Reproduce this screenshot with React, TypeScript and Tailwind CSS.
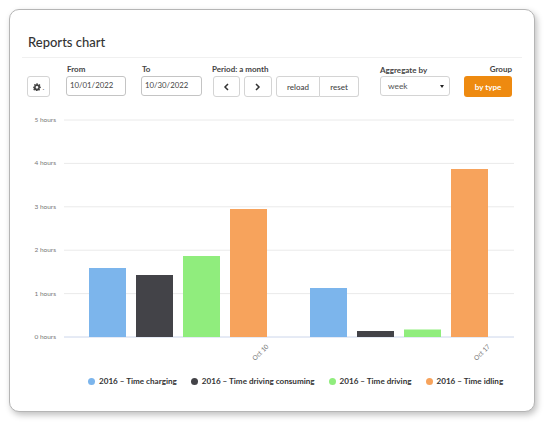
const Y_LABELS = ['5 hours', '4 hours', '3 hours', '2 hours', '1 hours', '0 hours'];

// x, top y of each bar, in chart coordinates
const BARS = [
  { x: 79, top: 158, fill: '#7cb5ec' },
  { x: 126, top: 165, fill: '#434348' },
  { x: 173, top: 146, fill: '#90ed7d' },
  { x: 220, top: 99, fill: '#f7a35c' },
  { x: 300, top: 178, fill: '#7cb5ec' },
  { x: 347, top: 221, fill: '#434348' },
  { x: 394, top: 219.5, fill: '#90ed7d' },
  { x: 441, top: 59, fill: '#f7a35c' },
];

const LEGEND = [
  { label: '2016 – Time charging', color: 'bg-[#7cb5ec]' },
  { label: '2016 – Time driving consuming', color: 'bg-[#434348]' },
  { label: '2016 – Time driving', color: 'bg-[#90ed7d]' },
  { label: '2016 – Time idling', color: 'bg-[#f7a35c]' },
];

function Field({ label, value, width }: { label: string; value: string; width: string }) {
  return (
    <div className="flex flex-col mb-[1px]">
      <span className="text-[8px] leading-[10px] font-bold text-[#444] mb-[2px] ml-[1px]">{label}</span>
      <div className={`${width} h-[20px] border border-[#c4c4c4] rounded-[3px] flex items-center pl-[3px] text-[7.8px] text-[#444]`}>
        {value}
      </div>
    </div>
  );
}

function GearIcon() {
  return (
    <svg width="8" height="8" viewBox="0 0 24 24" fill="#444">
      <path
        fillRule="evenodd"
        d="M10 1h4l.7 3.2 1.9.8 2.8-1.8 2.8 2.8-1.8 2.8.8 1.9L23.4 11v4l-3.2.7-.8 1.9 1.8 2.8-2.8 2.8-2.8-1.8-1.9.8-.7 2.8h-4l-.7-3.2-1.9-.8-2.8 1.8-2.8-2.8 1.8-2.8-.8-1.9L.6 15v-4l3.2-.7.8-1.9L2.8 5.6l2.8-2.8 2.8 1.8 1.9-.8zM12 9a4 4 0 1 0 0 8 4 4 0 0 0 0-8z"
      />
    </svg>
  );
}

function Chart() {
  return (
    <svg width="526" height="258" className="block">
      {Y_LABELS.map((label, i) => {
        const y = 10 + i * 43.4;
        return (
          <g key={label}>
            <line x1="54" x2="504" y1={y} y2={y} stroke={i === 5 ? '#ccd6eb' : '#eaeaea'} strokeWidth="1" />
            <text x="46" y={y + 2} textAnchor="end" fontSize="6.5" fill="#777">
              {label}
            </text>
          </g>
        );
      })}
      {BARS.map(bar => (
        <rect key={bar.x} x={bar.x} y={bar.top} width="37" height={227 - bar.top} fill={bar.fill} />
      ))}
      <text x="259" y="237" textAnchor="end" fontSize="6.5" fill="#777" transform="rotate(-45 259 237)">
        Oct 10
      </text>
      <text x="480.5" y="237" textAnchor="end" fontSize="6.5" fill="#777" transform="rotate(-45 480.5 237)">
        Oct 17
      </text>
    </svg>
  );
}

export default function App() {
  return (
    <div className="w-[544px] h-[422px] bg-white pt-[9px] pl-[9px] font-['Lato','Noto_Sans',sans-serif]">
      <div className="w-[526px] h-[403px] bg-white border border-[#b5b5b5] rounded-[10px] shadow-[2px_3px_6px_rgba(0,0,0,0.25)] overflow-hidden">
        <div className="mx-[12px] h-[48px] border-b border-[#f0f0f0] flex items-end pb-[6px] pl-[6px]">
          <h1 className="text-[13px] leading-[18px] font-medium text-[#333]">Reports chart</h1>
        </div>

        <div className="flex items-end h-[39px] pl-[17px]">
          <div className="w-[23px] h-[21px] border border-[#d4d4d4] rounded-[3px] flex items-center justify-center mr-[16px]">
            <GearIcon />
            <span className="text-[8px] leading-[8px] text-[#666] ml-[2px] self-end mb-[5px]">.</span>
          </div>
          <div className="mr-[15px]">
            <Field label="From" value="10/01/2022" width="w-[60px]" />
          </div>
          <div className="mr-[10px]">
            <Field label="To" value="10/30/2022" width="w-[61px]" />
          </div>
          <div className="flex flex-col w-[147px] mr-[21px]">
            <span className="text-[8px] leading-[10px] font-bold text-[#444] mb-[2px]">Period: a month</span>
            <div className="flex h-[21px] ml-[1px]">
              <div className="w-[27px] border border-[#d4d4d4] rounded-[3px] flex items-center justify-center text-[#333] mr-[4px]">
                <svg width="7" height="8" viewBox="0 0 7 8" fill="none" stroke="#333" strokeWidth="1.5">
                  <path d="M5 1 2 4l3 3" />
                </svg>
              </div>
              <div className="w-[28px] border border-[#d4d4d4] rounded-[3px] flex items-center justify-center mr-[4px]">
                <svg width="7" height="8" viewBox="0 0 7 8" fill="none" stroke="#333" strokeWidth="1.5">
                  <path d="M2 1l3 3-3 3" />
                </svg>
              </div>
              <div className="w-[45px] border border-[#d4d4d4] rounded-l-[3px] flex items-center justify-center text-[8px] font-medium text-[#444]">
                reload
              </div>
              <div className="w-[39px] border border-l-0 border-[#d4d4d4] rounded-r-[3px] flex items-center justify-center text-[8px] font-medium text-[#444]">
                reset
              </div>
            </div>
          </div>
          <div className="flex flex-col w-[70px] mr-[14px] mb-[1px]">
            <span className="text-[8px] leading-[10px] font-bold text-[#444] mb-[1px]">Aggregate by</span>
            <div className="h-[20px] border border-[#d4d4d4] rounded-[3px] flex items-center justify-between pl-[7px] pr-[5px] text-[8.4px] text-[#555]">
              week
              <span className="w-0 h-0 border-x-[2.5px] border-x-transparent border-t-[3px] border-t-[#222]" />
            </div>
          </div>
          <div className="flex flex-col w-[48px] items-end">
            <span className="text-[8px] leading-[10px] font-bold text-[#444] mb-[2px]">Group</span>
            <div className="w-[48px] h-[21px] bg-[#ee8a10] rounded-[3px] flex items-center justify-center text-[8px] font-bold text-white">
              by type
            </div>
          </div>
        </div>

        <div className="mt-[13px]">
          <Chart />
        </div>

        <div className="flex items-center pl-[78px] gap-[14px] mt-[7px] text-[8.1px] leading-[12px] font-bold text-[#333]">
          {LEGEND.map(item => (
            <div key={item.label} className="flex items-center gap-[4px]">
              <span className={`w-[7px] h-[7px] rounded-full ${item.color}`} />
              {item.label}
            </div>
          ))}
        </div>
      </div>
    </div>
  );
}
